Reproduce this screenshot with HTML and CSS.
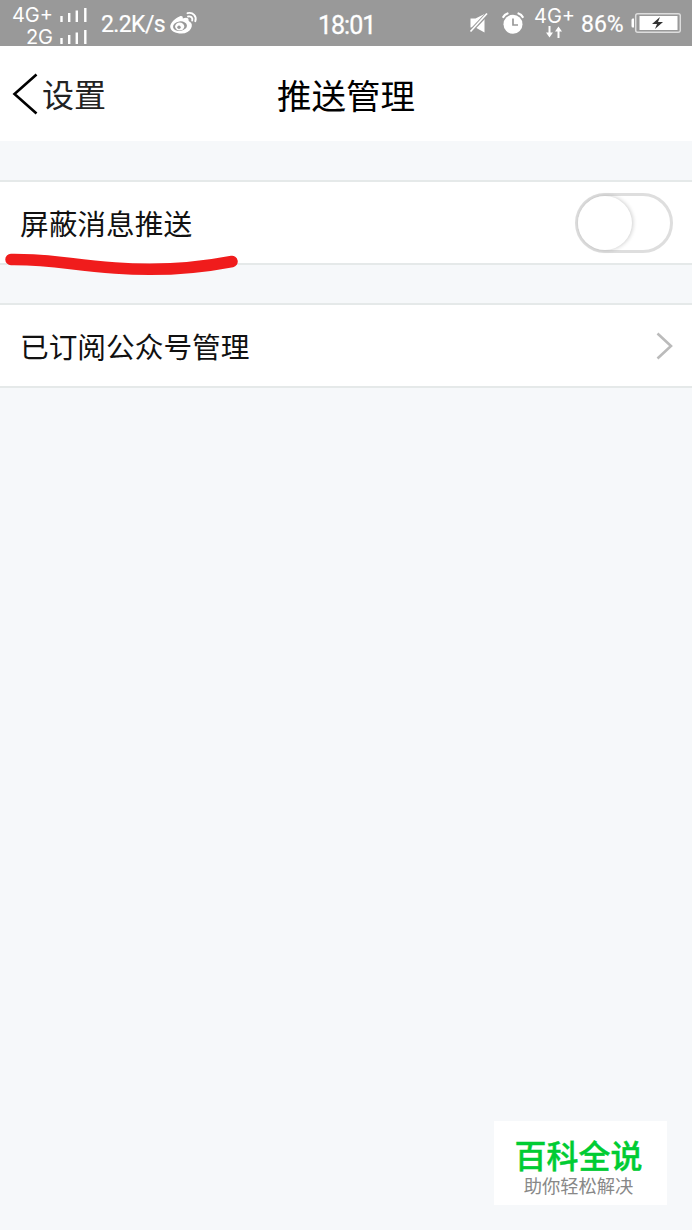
FILE: index.html
```html
<!DOCTYPE html>
<html lang="zh-CN">
<head>
<meta charset="UTF-8">
<title>推送管理</title>
<link rel="stylesheet" href="styles.css">
</head>
<body>
<div class="screen">
  <div class="status">
    <div class="signals">
      <div class="signal"><span class="net">4G+</span><svg class="bars" width="27" height="15" viewBox="0 0 27 15"><path d="M1.500 9v6M9.200 6v9M16.800 3.500v11.500M25.300 1v14"/></svg></div>
      <div class="signal"><span class="net">2G</span><svg class="bars" width="27" height="15" viewBox="0 0 27 15"><path d="M1.500 9v6M9.200 6v9M16.800 3.500v11.500M25.300 1v14"/></svg></div>
    </div>
    <span class="speed">2.2K/s</span>
    <svg class="weibo" width="28" height="24" viewBox="0 0 28 24">
      <path fill="#fff" d="M9.500 5.500c2-1 3.600-.4 3.300 2 2.700-1.200 6-1.200 5.800 1.800 0 .8.300 1 1.200 1.400 4.600 2.200 1.400 11.800-8.300 11.800C5.500 22.500.2 20 .2 15.500c0-3.500 5.100-8.300 9.300-10z"/>
      <ellipse cx="10" cy="15.200" rx="7" ry="4.800" fill="#999" transform="rotate(-8 10 15.200)"/>
      <ellipse cx="9.700" cy="15.500" rx="4.600" ry="4" fill="#fff"/>
      <circle cx="9" cy="16.200" r="1.700" fill="#999"/>
      <path fill="none" stroke="#fff" stroke-width="1.900" stroke-linecap="round" d="M17.500 2.200c5.500-1.400 9.500 3 7.800 8M18 5.500c3-.7 5 1.400 4.200 4"/>
    </svg>
    <span class="time">18:01</span>
    <svg class="mute" width="20" height="22" viewBox="0 0 20 22">
      <path fill="#fff" d="M1.500 6.500h5L15.500 2v18.500L6.500 15.500h-5z"/>
      <path stroke="#999" stroke-width="3.800" d="M1 20 19 1"/>
      <path stroke="#fff" stroke-width="1.700" d="M1.500 19.500 18 1.500"/>
    </svg>
    <svg class="alarm" width="22" height="22" viewBox="0 0 22 22">
      <circle cx="11" cy="12.300" r="9.500" fill="#fff"/>
      <path d="M11 6.500V13h5" fill="none" stroke="#999" stroke-width="1.700"/>
      <path d="M1.300 5Q2.500 2.500 5.500 1.500M20.700 5Q19.500 2.500 16.500 1.500" fill="none" stroke="#fff" stroke-width="2.200" stroke-linecap="round"/>
    </svg>
    <div class="data"><span>4G+</span>
      <svg width="16" height="12" viewBox="0 0 16 12"><path d="M3.500 0v8M12.500 12V4" stroke="#fff" stroke-width="2"/><path fill="#fff" d="M0 6.500h7l-3.500 5zM9 5.500h7l-3.500-5z"/></svg>
    </div>
    <span class="percent">86%</span>
    <svg class="battery" width="50" height="22" viewBox="0 0 50 22">
      <path d="M3 6.500H1.700Q.5 6.500.5 8v6q0 1.500 1.200 1.500H3z" fill="#fff"/>
      <rect x="4.700" y="1.700" width="44.600" height="18.600" rx="2" fill="none" stroke="#ddd" stroke-width="1.500"/>
      <rect x="8.500" y="4" width="38" height="14" fill="#fff"/>
      <path d="m29 5-8 7h5l-2 5 8-7h-5z" fill="#333"/>
    </svg>
  </div>
  <div class="navbar">
    <div class="back"><svg width="26" height="44" viewBox="0 0 26 44"><path d="M24.500 2.500 2.500 22l22 19.500" fill="none" stroke="#000" stroke-width="2.600"/></svg><span>设置</span></div>
    <h1 class="title">推送管理</h1>
    <div class="side"></div>
  </div>
  <div class="row">
    <span class="label">屏蔽消息推送</span>
    <div class="switch"><div class="knob"></div></div>
    <svg class="marker" width="236" height="28" viewBox="0 0 236 28"><path d="M8 8.500C52 8 68 14.500 112 17 160 20.500 198 16.500 229 10.500" fill="none" stroke="#f01c1c" stroke-width="11.500" stroke-linecap="round"/></svg>
  </div>
  <div class="row next">
    <span class="label">已订阅公众号管理</span>
    <svg width="18" height="30" viewBox="0 0 18 30"><path d="M2.500 2.500 16 15l-13.500 12.500" fill="none" stroke="#bbb" stroke-width="2.600"/></svg>
  </div>
  <div class="watermark">
    <div class="brand">百科全说</div>
    <div class="slogan">助你轻松解决</div>
  </div>
</div>
</body>
</html>
```
FILE: styles.css
```css
* { box-sizing: border-box; }
body { margin: 0; }
svg { display: block; flex: none; }
.screen {
  position: relative;
  height: 1230px;
  background: #f6f8fa;
  overflow: hidden;
  color: #111;
  font-family: "Noto Sans CJK SC", sans-serif;
}
.status {
  display: flex;
  align-items: center;
  height: 46px;
  background: #999;
  color: #fff;
  font-family: Roboto, sans-serif;
  white-space: nowrap;
}
.signals { width: 87px; padding-top: 5px; }
.signal { display: flex; align-items: center; justify-content: flex-end; height: 22px; gap: 7px; }
.net { font-family: Inter, sans-serif; font-size: 20px; line-height: 22px; letter-spacing: 0; }
.bars { fill: none; stroke: #fff; stroke-width: 2.4; }
.speed { width: 68px; margin-left: 14px; padding-top: 2px; font-size: 23px; letter-spacing: -.6px; -webkit-text-stroke: .2px #fff; }
.weibo { margin-left: 1px; }
.time { width: 60px; margin-left: 120px; padding-top: 4px; font-size: 25px; letter-spacing: -1px; -webkit-text-stroke: .3px #fff; }
.mute { margin-left: 91px; }
.alarm { margin-left: 13px; }
.data { width: 44px; margin-left: 10px; font-family: Inter, sans-serif; font-size: 20px; letter-spacing: 0; line-height: 14px; padding-top: 1px; }
.data span { display: block; height: 17px; }
.data svg { margin-left: 12px; }
.percent { width: 47px; margin-left: 3px; padding-top: 2px; font-size: 23px; -webkit-text-stroke: .2px #fff; }
.battery { margin-left: 3px; }
.navbar { display: flex; align-items: center; height: 95px; background: #fff; }
.back { display: flex; align-items: center; flex: 1 1 0; min-width: 0; gap: 4px; padding-left: 12px; font-size: 32px; line-height: 48px; color: #222; }
.back span { padding-bottom: 2px; }
.title { margin: 0; font-size: 34.500px; font-weight: 400; line-height: 50px; color: #000; }
.side { flex: 1 1 0; padding-left: 12px; }
.row {
  position: relative;
  display: flex;
  align-items: center;
  justify-content: space-between;
  height: 85px;
  margin-top: 39px;
  padding: 0 19px 0 20px;
  background: #fff;
  border: solid #e5e9e9;
  border-width: 2px 0;
}
.next { margin-top: 38px; }
.label { font-size: 28.700px; line-height: 42px; }
.switch { width: 98px; height: 60px; border: 3px solid #dedede; border-radius: 30px; background: #fff; }
.knob { width: 54px; height: 54px; border-radius: 50%; background: #fff; box-shadow: 1px 0 4px rgba(0,0,0,.2); }
.marker { position: absolute; left: 3px; top: 69px; z-index: 1; }
.watermark {
  position: absolute;
  left: 494px;
  top: 1121px;
  width: 173px;
  height: 84px;
  padding: 14px 4px 0 0;
  background: #fff;
  text-align: center;
}
.brand { font-size: 32px; font-weight: 500; -webkit-text-stroke: .4px #0c3; line-height: 38px; color: #0c3; }
.slogan { font-size: 18.300px; line-height: 24px; color: #888; }
```
